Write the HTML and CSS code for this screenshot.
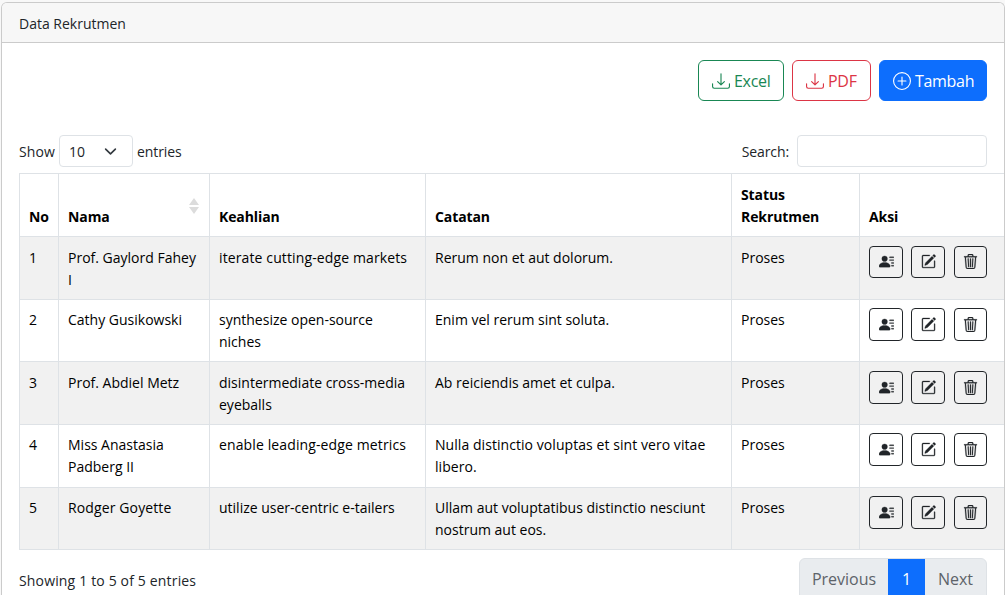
FILE: index.html
```html
<!DOCTYPE html>
<html lang="id">
<head>
<meta charset="utf-8">
<title>Data Rekrutmen</title>
<link rel="stylesheet" href="styles.css">
</head>
<body>
<svg class="sprite" aria-hidden="true">
  <symbol id="download" viewBox="0 0 16 16"><path d="M.5 9.9a.5.5 0 0 1 .5.5v2.5a1 1 0 0 0 1 1h12a1 1 0 0 0 1-1v-2.5a.5.5 0 0 1 1 0v2.5a2 2 0 0 1-2 2H2a2 2 0 0 1-2-2v-2.5a.5.5 0 0 1 .5-.5"/><path d="M7.646 11.854a.5.5 0 0 0 .708 0l3-3a.5.5 0 0 0-.708-.708L8.5 10.293V1.5a.5.5 0 0 0-1 0v8.793L5.354 8.146a.5.5 0 1 0-.708.708z"/></symbol>
  <symbol id="plus" viewBox="0 0 16 16"><path d="M8 15A7 7 0 1 1 8 1a7 7 0 0 1 0 14m0 1A8 8 0 1 0 8 0a8 8 0 0 0 0 16"/><path d="M8 4a.5.5 0 0 1 .5.5v3h3a.5.5 0 0 1 0 1h-3v3a.5.5 0 0 1-1 0v-3h-3a.5.5 0 0 1 0-1h3v-3A.5.5 0 0 1 8 4"/></symbol>
  <symbol id="person" viewBox="0 0 16 16"><path d="M6 8a3 3 0 1 0 0-6 3 3 0 0 0 0 6m-5 6s-1 0-1-1 1-4 6-4 6 3 6 4-1 1-1 1zM11 3.5a.5.5 0 0 1 .5-.5h4a.5.5 0 0 1 0 1h-4a.5.5 0 0 1-.5-.5m.5 2.5a.5.5 0 0 0 0 1h4a.5.5 0 0 0 0-1zm2 3a.5.5 0 0 0 0 1h2a.5.5 0 0 0 0-1zm0 3a.5.5 0 0 0 0 1h2a.5.5 0 0 0 0-1z"/></symbol>
  <symbol id="edit" viewBox="0 0 16 16"><path d="M15.502 1.94a.5.5 0 0 1 0 .706L14.459 3.69l-2-2L13.502.646a.5.5 0 0 1 .707 0l1.293 1.293zm-1.75 2.456-2-2L4.939 9.21a.5.5 0 0 0-.121.196l-.805 2.414a.25.25 0 0 0 .316.316l2.414-.805a.5.5 0 0 0 .196-.12z"/><path fill-rule="evenodd" d="M1 13.5A1.5 1.5 0 0 0 2.5 15h11a1.5 1.5 0 0 0 1.5-1.5v-6a.5.5 0 0 0-1 0v6a.5.5 0 0 1-.5.5h-11a.5.5 0 0 1-.5-.5v-11a.5.5 0 0 1 .5-.5H9a.5.5 0 0 0 0-1H2.500A1.5 1.5 0 0 0 1 2.500z"/></symbol>
  <symbol id="trash" viewBox="0 0 16 16"><path d="M6.500 1h3a.5.5 0 0 1 .5.5v1H6v-1a.5.5 0 0 1 .5-.5M11 2.500v-1A1.500 1.500 0 0 0 9.500 0h-3A1.500 1.500 0 0 0 5 1.500v1H1.500a.5.5 0 0 0 0 1h.538l.853 10.660A2 2 0 0 0 4.885 16h6.230a2 2 0 0 0 1.994-1.840l.853-10.660h.538a.5.5 0 0 0 0-1zm1.958 1-.846 10.580a1 1 0 0 1-.997.920h-6.230a1 1 0 0 1-.997-.920L3.042 3.500zm-7.487 1a.5.5 0 0 1 .528.470l.5 8.500a.5.5 0 0 1-.998.060L5 5.030a.5.5 0 0 1 .470-.530zm5.058 0a.5.5 0 0 1 .470.530l-.5 8.500a.5.5 0 1 1-.998-.060l.5-8.500a.5.5 0 0 1 .528-.470M8 4.500a.5.5 0 0 1 .5.5v8.500a.5.5 0 0 1-1 0V5a.5.5 0 0 1 .5-.5"/></symbol>
</svg>
<main class="card">
  <header class="card-header">Data Rekrutmen</header>
  <section class="card-body">
    <div class="toolbar">
      <button class="btn btn-excel"><svg><use href="#download"/></svg>Excel</button>
      <button class="btn btn-pdf"><svg><use href="#download"/></svg>PDF</button>
      <button class="btn btn-add"><svg><use href="#plus"/></svg>Tambah</button>
    </div>
    <div class="filters">
      <div class="length"><span>Show</span><button class="select">10<svg viewBox="0 0 16 16"><path d="m2 5 6 6 6-6"/></svg></button><span>entries</span></div>
      <label class="search"><span>Search:</span><input type="search"></label>
    </div>
    <table class="table">
      <colgroup><col class="c-no"><col class="c-name"><col class="c-skill"><col class="c-note"><col class="c-status"><col class="c-action"></colgroup>
      <thead>
        <tr><th>No</th><th><div class="sortable">Nama<svg class="sort" viewBox="0 0 10 16"><path d="M5 0l5 7H0zM0 9h10l-5 7z"/></svg></div></th><th>Keahlian</th><th>Catatan</th><th>Status<br>Rekrutmen</th><th>Aksi</th></tr>
      </thead>
      <tbody>
        <tr><td>1</td><td>Prof. Gaylord Fahey<br>I</td><td class="skill">iterate cutting-edge markets</td><td>Rerum non et aut dolorum.</td><td>Proses</td><td><div class="actions"><button><svg><use href="#person"/></svg></button><button><svg><use href="#edit"/></svg></button><button><svg><use href="#trash"/></svg></button></div></td></tr>
        <tr class="short"><td>2</td><td>Cathy Gusikowski</td><td>synthesize open-source<br>niches</td><td>Enim vel rerum sint soluta.</td><td>Proses</td><td><div class="actions"><button><svg><use href="#person"/></svg></button><button><svg><use href="#edit"/></svg></button><button><svg><use href="#trash"/></svg></button></div></td></tr>
        <tr><td>3</td><td>Prof. Abdiel Metz</td><td>disintermediate cross-media<br>eyeballs</td><td>Ab reiciendis amet et culpa.</td><td>Proses</td><td><div class="actions"><button><svg><use href="#person"/></svg></button><button><svg><use href="#edit"/></svg></button><button><svg><use href="#trash"/></svg></button></div></td></tr>
        <tr class="raised"><td>4</td><td>Miss Anastasia<br>Padberg II</td><td class="skill">enable leading-edge metrics</td><td class="note">Nulla distinctio voluptas et sint vero vitae<br>libero.</td><td>Proses</td><td><div class="actions"><button><svg><use href="#person"/></svg></button><button><svg><use href="#edit"/></svg></button><button><svg><use href="#trash"/></svg></button></div></td></tr>
        <tr class="short"><td>5</td><td class="skill">Rodger Goyette</td><td>utilize user-centric e-tailers</td><td>Ullam aut voluptatibus distinctio nesciunt<br>nostrum aut eos.</td><td>Proses</td><td><div class="actions"><button><svg><use href="#person"/></svg></button><button><svg><use href="#edit"/></svg></button><button><svg><use href="#trash"/></svg></button></div></td></tr>
      </tbody>
    </table>
    <footer class="footer">
      <div class="info">Showing 1 to 5 of 5 entries</div>
      <nav class="pagination"><span class="prev">Previous</span><span class="active">1</span><span class="next">Next</span></nav>
    </footer>
  </section>
</main>
</body>
</html>
```

FILE: styles.css
```css
* { box-sizing: border-box; }
body {
  margin: 0;
  height: 595px;
  overflow: hidden;
  padding: 2px 0 0 1px;
  background: #f8f8f8;
  color: #212529;
  font: 14px/22px "Open Sans", "Noto Sans", sans-serif;
}
button, input { font: inherit; color: inherit; margin: 0; }
svg { fill: currentColor; flex: none; }
.sprite { display: none; }
.card {
  width: 1004px;
  height: 593px;
  border: 1px solid #cbcbcb;
  border-bottom: 0;
  border-radius: 6px 6px 0 0;
  background: #fff;
  overflow: hidden;
}
.card-header {
  height: 40px;
  padding: 10px 17px 0;
  background: #f7f7f7;
  border-bottom: 1px solid #cbcbcb;
}
.card-body { padding: 17px 0 0 17px; }
.toolbar { display: flex; justify-content: flex-end; gap: 8px; padding-right: 17px; }
.btn {
  display: flex;
  align-items: center;
  gap: 4px;
  height: 41px;
  padding: 0 0 0 13px;
  border: 1px solid;
  border-radius: 6px;
  background: #fff;
  font-size: 16px;
  letter-spacing: -0.3px;
  white-space: nowrap;
}
.btn svg { width: 18px; height: 18px; }
.btn-excel { width: 86px; color: #198754; }
.btn-pdf { width: 79px; color: #dc3545; }
.btn-add { width: 108px; color: #fff; background: #0d6efd; border-color: #0d6efd; }
.filters {
  display: flex;
  justify-content: space-between;
  align-items: center;
  height: 32px;
  margin: 34px 17px 6px 0;
}
.length { display: flex; align-items: center; }
.length span, .search span { padding-top: 2px; }
.length span:first-child { width: 40px; letter-spacing: 0.1px; }
.length span:last-child { letter-spacing: -0.1px; }
.select {
  display: flex;
  align-items: center;
  justify-content: space-between;
  width: 74px;
  height: 32px;
  margin-right: 4px;
  padding: 1px 15px 0 9px;
  border: 1px solid #dee2e6;
  border-radius: 4px;
  background: #fff;
}
.select svg { width: 13px; height: 13px; margin-top: -1px; fill: none; stroke: #343a40; stroke-width: 2; stroke-linecap: round; stroke-linejoin: round; }
.search { display: flex; align-items: center; gap: 8px; letter-spacing: -0.1px; }
.search input { width: 190px; height: 32px; border: 1px solid #dee2e6; border-radius: 4px; background: #fff; }
.table {
  width: 986px;
  table-layout: fixed;
  border-collapse: separate;
  border-spacing: 0;
  border-left: 1px solid #dee2e6;
  border-top: 1px solid #dee2e6;
  color: #000;
}
.c-no { width: 39px; }
.c-name { width: 151px; }
.c-skill { width: 216px; }
.c-note { width: 306px; }
.c-status { width: 128px; }
.c-action { width: 145px; }
.table th, .table td {
  height: 63px;
  padding: 10px 0 7px 9px;
  border-right: 1px solid #dee2e6;
  border-bottom: 1px solid #dee2e6;
  text-align: left;
  vertical-align: top;
  white-space: nowrap;
}
.table th { vertical-align: bottom; padding: 9px 0 8px 9px; font-weight: 700; letter-spacing: -0.1px; }
.table .short td { height: 62px; padding-top: 9px; }
.table .raised td { padding-top: 9px; padding-bottom: 8px; }
.table .skill { letter-spacing: 0.12px; }
.table .note { letter-spacing: 0.06px; }
.table tbody tr:nth-child(odd) td { background: #f1f1f1; }
.sortable { display: flex; justify-content: space-between; padding-right: 10px; }
.sort { width: 10px; height: 16px; margin-top: -8px; fill: #dcdcdc; }
.actions { display: flex; gap: 8px; margin-top: -1px; }
.actions button {
  display: grid;
  place-items: center;
  width: 34px;
  height: 33px;
  padding: 0 0 1px;
  border: 1px solid #212529;
  border-radius: 4px;
  background: transparent;
  color: #212529;
}
.actions button:last-child { width: 33px; margin-left: 1px; }
.table tbody tr:first-child .actions button { height: 32px; }
.actions svg { width: 15px; height: 15px; stroke: currentColor; stroke-width: 0.3; }
.footer { display: flex; justify-content: space-between; padding: 8px 17px 0 0; }
.info { padding-top: 12px; letter-spacing: 0.16px; }
.pagination {
  display: flex;
  height: 43px;
  border: 1px solid #dee2e6;
  border-radius: 6px;
  overflow: hidden;
  background: #e9ecef;
  color: #5d6369;
  font-size: 16px;
  line-height: 41px;
  text-align: center;
}
.prev { width: 88px; }
.active { width: 37px; background: #0d6efd; color: #fff; }
.next { width: 61px; }
```
